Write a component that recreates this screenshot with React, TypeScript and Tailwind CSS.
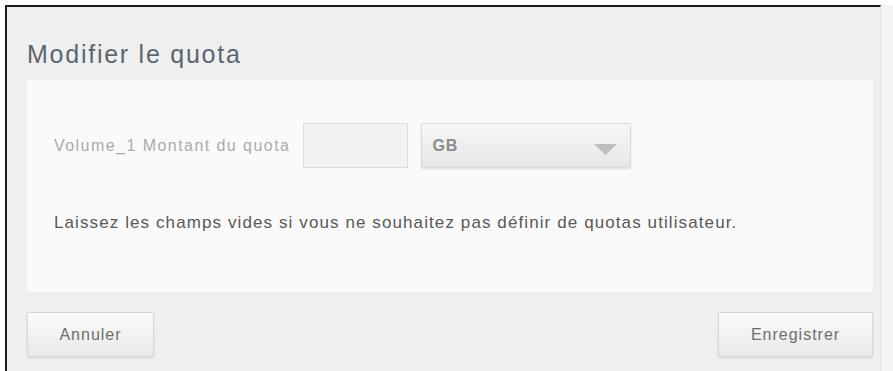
export default function App() {
  return (
    <div className="h-[371px] w-[893px] overflow-hidden bg-white pl-[5px] pt-[5px] font-['Liberation_Sans',Arial,sans-serif]">
      <div className="flex h-full bg-[#f3f3f3]">
        <div className="flex h-full w-[876px] flex-col border-l-2 border-t-2 border-r border-[#1c1c1c] border-r-[#e2e2e2] bg-[#efefef] pl-[20px] pr-[7px]">
          <h2 className="pt-[29px] text-[25px] leading-[36px] tracking-[1.75px] text-[#5b6670]">Modifier le quota</h2>
          <div className="mt-[8px] h-[212px] bg-[#fafafa] pl-[27px] pt-[43px]">
            <div className="flex items-center">
              <span className="text-[16px] tracking-[1.45px] text-[#ababab]">Volume_1 Montant du quota</span>
              <div className="ml-[13px] h-[45px] w-[105px] border border-[#dcdcdc] bg-[#f2f2f2]" />
              <div className="ml-[13px] flex h-[45px] w-[210px] items-center justify-between rounded-[2px] border border-[#dadada] bg-gradient-to-b from-[#f7f7f7] to-[#e7e7e7] pl-[10px] pr-[13px] shadow-[0_1px_2px_rgba(0,0,0,0.12)]">
                <span className="text-[16px] font-bold tracking-[1px] text-[#8c8c8c]">GB</span>
                <svg width="23" height="12" viewBox="0 0 23 12" className="mt-[8px]">
                  <polygon points="0,0 23,0 11.5,11" fill="#bdbdbd" />
                </svg>
              </div>
            </div>
            <p className="mt-[43px] text-[17px] leading-[24px] tracking-[1.1px] text-[#585858]">
              Laissez les champs vides si vous ne souhaitez pas définir de quotas utilisateur.
            </p>
          </div>
          <div className="mt-[20px] flex justify-between">
            <button className="h-[45px] w-[127px] rounded-[2px] border border-[#d8d8d8] bg-gradient-to-b from-[#fbfbfb] to-[#e8e8e8] text-[16px] tracking-[1px] text-[#6e6e6e] shadow-[0_1px_2px_rgba(0,0,0,0.12)]">
              Annuler
            </button>
            <button className="h-[45px] w-[155px] rounded-[2px] border border-[#d8d8d8] bg-gradient-to-b from-[#fbfbfb] to-[#e8e8e8] text-[16px] tracking-[1px] text-[#6e6e6e] shadow-[0_1px_2px_rgba(0,0,0,0.12)]">
              Enregistrer
            </button>
          </div>
        </div>
      </div>
    </div>
  );
}
